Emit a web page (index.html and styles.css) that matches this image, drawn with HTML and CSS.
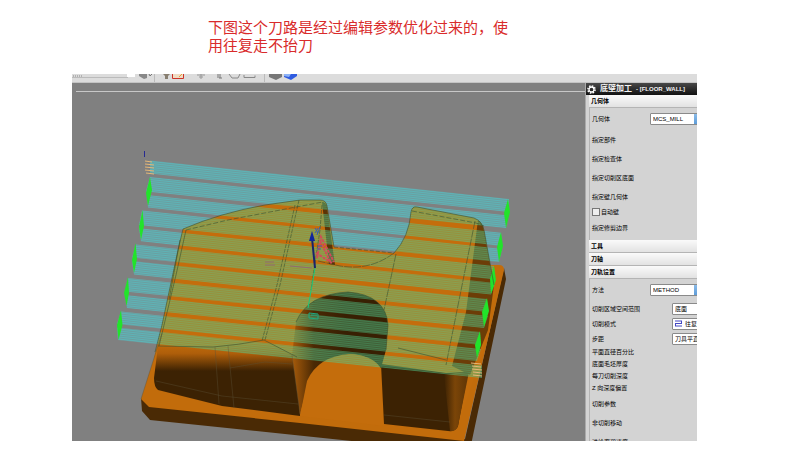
FILE: index.html
```html
<!DOCTYPE html>
<html lang="zh-CN">
<head>
    <meta charset="UTF-8">
    <meta name="viewport" content="width=device-width, initial-scale=1.0">
    <title>底壁加工</title>
    <link rel="stylesheet" href="styles.css">
</head>
<body>

<p class="note">下图这个刀路是经过编辑参数优化过来的，使用往复走不抬刀</p>

<div class="app">
    <div class="toolbar">
        <svg class="tools" width="240" height="9" viewBox="72 74 240 9">
            <path d="M73 76h10" stroke="#888" stroke-dasharray="1 1"/>
            <path d="M72 77.500h56" stroke="#bbb"/>
            <rect x="127" y="74" width="8" height="3" fill="#fff"/>
            <path d="M139 74h8v4l-3 1-5-3z" fill="#888"/>
            <path d="M149 74l1 2 2-2" stroke="#777" fill="none"/>
            <path d="M154.500 74v8M264.500 74v8" stroke="#bbb"/>
            <path d="M163 74h7l-2 2v3h-3v-3z" fill="#887f70"/>
            <path d="M172.500 74v4.500h11v-4.500" stroke="#cc3328" fill="#f0dcc4"/>
            <path d="M179 77l3-3" stroke="#e8a13c"/>
            <path d="M197 75h8M199 77h4M201 74v5" stroke="#999"/>
            <path d="M217 75h4M217 77h4M219 78h3" stroke="#777"/>
            <path d="M229 74l3 4h6l2-4M244 75v2.500h11v-2" stroke="#888" fill="none"/>
            <path d="M269 74h13v3l-6 3-7-3z" fill="#777"/>
            <path d="M284 74h13v2l-6 4-7-3z" fill="#2e5be0"/>
            <path d="M284 74h7l-2 3-5-1z" fill="#8db2f5"/>
        </svg>
    </div>
    <div class="workspace">
        <div class="view">
            <svg class="scene" viewBox="72 83 513 358" preserveAspectRatio="xMinYMin slice">
                <defs>
                    <pattern id="passes" width="8" height="2" patternUnits="userSpaceOnUse" patternTransform="rotate(6.100)">
                        <rect width="8" height="2" fill="#42d6dc" fill-opacity=".36"/>
                        <rect width="8" height="1" fill="#42e4e8" fill-opacity=".3"/>
                    </pattern>
                    <pattern id="passes-part" width="8" height="2" patternUnits="userSpaceOnUse" patternTransform="rotate(6.100)">
                        <rect width="8" height="2" fill="#50c88c" fill-opacity=".38"/>
                        <rect width="8" height="1" fill="#58e0a0" fill-opacity=".22"/>
                    </pattern>
                    <linearGradient id="front" gradientUnits="userSpaceOnUse" x1="0" y1="342" x2="0" y2="371">
                        <stop offset="0" stop-color="#c46d0c"/>
                        <stop offset=".4" stop-color="#ae5e0a"/>
                        <stop offset="1" stop-color="#3c2203"/>
                    </linearGradient>
                    <linearGradient id="side" gradientUnits="userSpaceOnUse" x1="444" y1="0" x2="466" y2="0">
                        <stop offset="0" stop-color="#3c2203"/>
                        <stop offset=".5" stop-color="#7b4508"/>
                        <stop offset="1" stop-color="#643806"/>
                    </linearGradient>
                    <linearGradient id="arch" gradientUnits="userSpaceOnUse" x1="293" y1="0" x2="345" y2="0">
                        <stop offset="0" stop-color="#a4590a"/>
                        <stop offset=".4" stop-color="#4a2904"/>
                        <stop offset="1" stop-color="#382003"/>
                    </linearGradient>
                    <path id="bands" d="
                        M150 160.400L509 199V212L150 173.600z
                        M150 177L508 215.500L506 228L146 191.600z
                        M147 195L501 232.800L502 246L148 207.600z
                        M142 210.500L502 249L499 262L139 225z
                        M139 228.300L494 266L495 279.500L141 241.200z
                        M136 244.400L495 283L491 294.500L132 257.500z
                        M132 261L487 299L488 312L134 274.500z
                        M128 278L488 316L484 328L125 291.500z
                        M125 295L480 332L481 345L127 308z
                        M121 311.500L481 349L477 361L117 324z
                        M117 327.500L482 365.500V378L118 340z"/>
                    <path id="block" d="M183 229Q220 213 265 205L300 200H320Q326 200 327 206L334 247L394 253Q409 237 411 212Q412 206 417 207L474 218Q482 221 484 230L494 285L490 330L458 426Q456 432 448 431L385 425L380 366Q368 354 350 354Q322 360 310 375L300 416L222 406L158 390Q154 387 154 380V358L162 325L178 250z"/>
                    <clipPath id="solid">
                        <path d="M183 229Q220 213 265 205L300 200H320Q326 200 327 206L334 247L394 253Q409 237 411 212Q412 206 417 207L474 218Q482 221 484 230L490 265H500Q505 265 504 270L470 430H154V358L162 325L178 250z"/>
                    </clipPath>
                    <clipPath id="air">
                        <path clip-rule="evenodd" d="M72 83H585V441H72zM183 229Q220 213 265 205L300 200H320Q326 200 327 206L334 247L394 253Q409 237 411 212Q412 206 417 207L474 218Q482 221 484 230L490 265H500Q505 265 504 270L470 430H154V358L162 325L178 250z"/>
                    </clipPath>
                </defs>

                <!-- base plate -->
                <path d="M141 398L150 406L465 439L504 268L506 279L471 445H390L150 420L142 411z" fill="#4a2a05"/>
                <path d="M162 333L141 399L149 407L300 423L464 441L504 270Q504 265 499 265H484L300 250z" fill="#c26c0b"/>

                <!-- part -->
                <use href="#block" fill="#c46d0c"/>
                <path d="M322 202Q326 202 327 207L335 265L329 264z" fill="#5c3406"/>
                <path d="M478 220Q483 223 484 231L494 285L488 330L470 375L452 366L466 312z" fill="#6c3d07"/>
                <path d="M158 346L213 347Q238 345 264 340L297 357L300 416L222 406L158 390Q154 387 154 378z" fill="url(#front)"/>
                <path d="M292 355L296 322Q308 294 348 292Q386 295 388 325L386 350L381 368Q368 354 350 354Q322 360 310 378L300 414z" fill="url(#arch)"/>
                <path d="M300 416L307 381Q318 356 350 354Q376 356 381 370L384 426z" fill="#c46d0c"/>
                <path d="M381 364L446 373L468 372L458 426Q456 432 448 431L384 424z" fill="#3c2203"/>
                <path d="M444 374L469 372L458 426Q456 432 450 431z" fill="url(#side)"/>

                <!-- tool path -->
                <use href="#bands" fill="url(#passes)" clip-path="url(#air)"/>
                <use href="#bands" fill="url(#passes-part)" clip-path="url(#solid)"/>
                <g fill="#22e32a">
                    <path d="M150 177L152 190L148 206L146 193zM142.500 210L144 226L141 240L139 227zM135.500 243L137 259L134 273L132 260zM128 277L129 293L126.500 306L124 293zM121 310L122.500 325L118.500 340L117 325z"/>
                    <path d="M508 199L510 212L506 228L504 213zM501 232L503 246L499 262L497 247zM494 266L496 280L491 294L490 279zM487 298L489 311L484 327L482 312zM480 331L481 345L477 358L475 345z"/>
                </g>
                <path d="M145 161l7 1M145 164l9 1M145 167l9 1M145 170l9 1M146 173l8 1M471 363l10 1M472 366l9 1M472 369l10 1M473 372l9 1M473 375l9 1" stroke="#e5b777"/>

                <!-- edges -->
                <g fill="none" stroke="#3a5230" stroke-width=".6">
                    <path d="M183 229Q220 213 265 205L300 200H320Q326 200 327 206L334 247"/>
                    <path d="M394 253Q409 237 411 212Q412 206 417 207L474 218Q482 221 484 230L494 285"/>
                    <path d="M183 229L178 250L162 325L155 352M186 230L176 275L159 346M180 240L169 300"/>
                    <path d="M186 230L228 220L296 207L323 202M412 211L476 223L484 226" stroke-dasharray="5 2"/>
                    <path d="M299 200L280 285L265 340M295 205L277 285L262 341M322 205L320 230L311 290" stroke-dasharray="4 1"/>
                    <path d="M334 247L394 253" stroke-dasharray="4 2"/>
                    <path d="M394 253Q370 271 340 266L318 261M396 254L384 310M475 221L446 365" stroke-dasharray="8 1"/>
                    <path d="M296 322Q308 294 348 292Q386 295 388 325L386 350"/>
                    <path d="M158 346L213 347Q238 345 264 340L297 357M398 348L446 360"/>
                </g>
                <g fill="none" stroke="#5c5038" stroke-width=".4">
                    <path d="M215 347L219 404M228 346L234 408M156 381L222 396L298 404M230 368L265 362L292 364M384 415L450 422M292 355L300 414"/>
                    <path d="M162 333L141 399"/>
                </g>

                <!-- coordinate systems -->
                <path d="M144.500 151v6" stroke="#272a92"/>
                <path d="M312 238L315 268" stroke="#18246c" stroke-width="2"/>
                <path d="M309 241L312 231L315 241z" fill="#12269c"/>
                <path d="M315 268L308 308" stroke="#1cc879"/>
                <path d="M317 258L321 237L334 262M320 241L331 263M316 253L332 263" stroke="#d04b58" stroke-width="2" stroke-dasharray="3 1" fill="none"/>
                <path d="M315 228l3 5m0-5l-3 5M320 227l-3 8M317 246h5M317 249h4" stroke="#3f5fab"/>
                <path d="M265 262h9M265 265h10M290 266l22 2" stroke="#926a70"/>
                <path d="M309 313l9 1v5l-9-1zM311 315h6" stroke="#20a981" fill="none"/>
            </svg>
        </div>

        <form class="panel">
            <h1 class="panel-title">
                <svg class="gear" width="9" height="9" viewBox="0 0 9 9">
                    <circle cx="4.500" cy="4.500" r="3.600" fill="none" stroke="#fff" stroke-width="1.500" stroke-dasharray="1.600 1.200"/>
                    <circle cx="4.500" cy="4.500" r="2.500" fill="none" stroke="#fff" stroke-width="1.300"/>
                </svg>
                <span>底壁加工</span>
                <small>- [FLOOR_WALL]</small>
            </h1>

            <h2 class="group">几何体</h2>
            <div class="fields">
                <div class="row row-top">
                    <label for="geometry">几何体</label>
                    <select id="geometry" class="combo"><option>MCS_MILL</option></select>
                </div>
                <div class="row">指定部件</div>
                <div class="row">指定检查体</div>
                <div class="row">指定切削区底面</div>
                <div class="row">指定壁几何体</div>
                <div class="row row-tight">
                    <input type="checkbox" id="auto-wall">
                    <label for="auto-wall">自动壁</label>
                </div>
                <div class="row">指定修剪边界</div>
            </div>

            <h2 class="group">工具</h2>
            <h2 class="group">刀轴</h2>
            <h2 class="group">刀轨设置</h2>
            <div class="fields">
                <div class="row row-top">
                    <label for="method">方法</label>
                    <select id="method" class="combo"><option>METHOD</option></select>
                </div>
                <div class="row row-select">
                    <label for="range">切削区域空间范围</label>
                    <select id="range" class="combo combo-small"><option>底面</option></select>
                </div>
                <div class="row row-select">
                    <label for="pattern">切削模式</label>
                    <div class="combo combo-small combo-icon">
                        <svg width="7" height="7" viewBox="0 0 7 7"><path d="M0 1h7M0 3.500h7M0 6h7M6.500 1v2.500M.5 3.500v2.500" stroke="#4548c4" fill="none"/></svg>
                        <select id="pattern"><option>往复</option></select>
                    </div>
                </div>
                <div class="row row-select">
                    <label for="step">步距</label>
                    <select id="step" class="combo combo-small"><option>刀具平直</option></select>
                </div>
                <div class="row row-tight">平面直径百分比</div>
                <div class="row row-tight">底面毛坯厚度</div>
                <div class="row row-tight">每刀切削深度</div>
                <div class="row row-tight">Z 向深度偏置</div>
                <div class="row">切削参数</div>
                <div class="row">非切削移动</div>
                <div class="row">进给率和速度</div>
            </div>
        </form>
    </div>
</div>

</body>
</html>
```
FILE: styles.css
```css
* {
    box-sizing: border-box;
    margin: 0;
    padding: 0;
}

body {
    background-color: #fff;
    font-family: "Liberation Sans", "Noto Sans CJK SC", sans-serif;
    color: #000;
}

.note {
    width: 304px;
    margin: 19px 0 19px 26%;
    font-size: 15px;
    line-height: 18px;
    color: #d92b2b;
}

.app {
    display: flex;
    flex-direction: column;
    margin: 0 103px 0 9%;
    aspect-ratio: 625 / 367;
    overflow: hidden;
}

.toolbar {
    flex: none;
    height: 9px;
    background-color: #dcdcdc;
    border-bottom: 1px solid #c4c4c4;
}

.tools {
    display: block;
}

.workspace {
    display: flex;
    flex: 1;
    min-height: 0;
}

.view {
    flex: 1;
    min-width: 0;
    padding-left: 4px;
    background-color: #808080;
    position: relative;
}

.view::before {
    content: "";
    display: block;
    height: 8px;
    border-bottom: 1px solid #c8c8c8;
}

.scene {
    position: absolute;
    top: 0;
    left: 0;
    width: 100%;
    height: 100%;
}

.panel {
    flex: none;
    width: 112px;
    padding-left: 3px;
    overflow: hidden;
    background-color: #d3d3d3;
    border-left: 1px solid #aaa;
    font-size: 6px;
    line-height: 10px;
    white-space: nowrap;
}

.panel-title {
    display: flex;
    align-items: center;
    gap: 4px;
    height: 12px;
    margin-left: -3px;
    background: linear-gradient(#484848, #111);
    color: #f4f4f4;
    font-size: 8px;
}

.panel-title small {
    font-size: 6px;
}

.gear {
    margin-left: 1px;
}

.group {
    height: 13px;
    padding-left: 2px;
    background: linear-gradient(#fafafa, #e2e2e2);
    border-bottom: 1px solid #b4b4b4;
    font-size: 6px;
    line-height: 13px;
}

.fields {
    padding: 0 0 3px 2px;
    border-left: 1px solid #b4b4b4;
}

.row {
    display: flex;
    align-items: center;
    height: 19px;
}

.row-top {
    height: 22px;
}

.row-select {
    height: 15px;
}

.row-tight {
    height: 12px;
}

.row input {
    appearance: none;
    width: 8px;
    height: 8px;
    margin-right: 1px;
    background-color: #eee;
    border: 1px solid #777;
}

.row select {
    appearance: none;
    color: #000;
    font-family: inherit;
    font-size: 6px;
    line-height: 10px;
}

.row .combo {
    flex: none;
    width: 58px;
    height: 12px;
    margin-left: auto;
    margin-right: -11px;
    padding-left: 2px;
    border: 1px solid #8a8a8a;
    border-radius: 1px;
    background: linear-gradient(#8bbbe8, #5e9cd8) right / 13px 100% no-repeat #fff;
}

.row .combo-small {
    margin-right: -33px;
}

.combo-icon {
    display: flex;
    align-items: center;
    gap: 3px;
}

.combo-icon select {
    border: none;
    background: none;
}
```
